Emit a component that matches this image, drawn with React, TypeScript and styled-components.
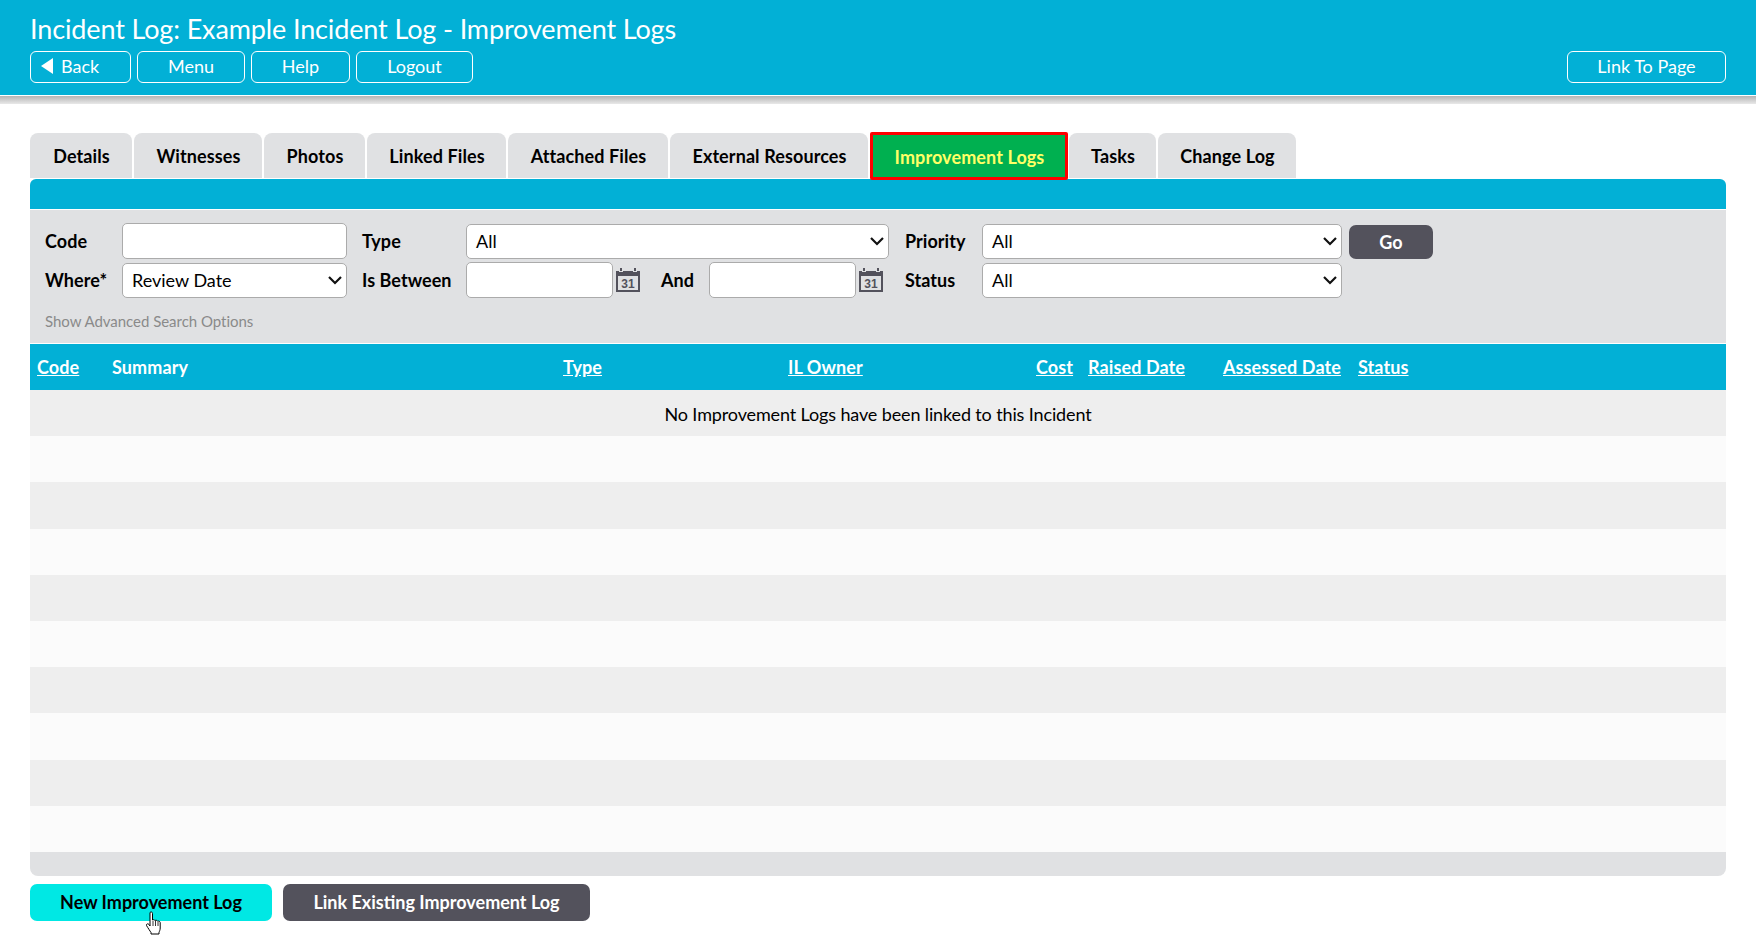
import React from "react";
import styled, { createGlobalStyle } from "styled-components";

const GlobalStyle = createGlobalStyle`
  html, body {
    margin: 0;
    padding: 0;
    background: #fff;
    font-family: Lato, "Open Sans", sans-serif;
    color: #000;
  }
  * { box-sizing: border-box; }
`;

const BLUE = "#02b0d6";
const GREY = "#e0e1e3";
const DARK = "#53525c";

const Page = styled.div`
  width: 1756px;
  height: 943px;
  overflow: hidden;
`;

const Header = styled.header`
  height: 96px;
  background: ${BLUE};
  border-bottom: 1px solid #fff;
  padding: 12px 30px 0;
  color: #fff;
`;

const HeaderShadow = styled.div`
  height: 8px;
  background: linear-gradient(#b4b4b4, #e8e8e8);
`;

const Title = styled.h1`
  margin: 0;
  font-size: 27px;
  line-height: 34px;
  font-weight: 400;
  letter-spacing: -0.13px;
`;

const HeaderBar = styled.div`
  display: flex;
  justify-content: space-between;
  margin-top: 5px;
`;

const NavGroup = styled.nav`
  display: flex;
  gap: 6px;
`;

const NavButton = styled.button<{ $width: number; $start?: boolean }>`
  width: ${(p) => p.$width}px;
  height: 32px;
  display: flex;
  align-items: center;
  justify-content: ${(p) => (p.$start ? "flex-start" : "center")};
  gap: 7px;
  padding: 0 0 2px ${(p) => (p.$start ? "9px" : "0")};
  background: transparent;
  border: 1px solid #fff;
  border-radius: 6px;
  color: #fff;
  font: 400 18px Lato, sans-serif;
`;

const Main = styled.main`
  padding: 29px 30px 0;
`;

const Tabs = styled.div`
  display: flex;
  gap: 2px;
  height: 46px;
`;

const Tab = styled.div<{ $active?: boolean; $width: number }>`
  width: ${(p) => p.$width}px;
  height: ${(p) => (p.$active ? "48px" : "45px")};
  margin: ${(p) => (p.$active ? "-1px -1px 0 0" : "0")};
  padding: ${(p) => (p.$active ? "1px 0 0 1px" : "0 0 0 1px")};
  display: flex;
  align-items: center;
  justify-content: center;
  font-size: 18px;
  font-weight: 700;
  letter-spacing: 0.1px;
  background: ${(p) => (p.$active ? "#00b050" : GREY)};
  color: ${(p) => (p.$active ? "#ffff66" : "#000")};
  border: ${(p) => (p.$active ? "3px solid #f00" : "none")};
  border-radius: ${(p) => (p.$active ? "2px" : "8px 8px 0 0")};
  position: relative;
`;

const BlueBar = styled.div`
  height: 30px;
  background: ${BLUE};
  border-radius: 6px 6px 0 0;
`;

const Filter = styled.form`
  height: 133px;
  margin-top: 1px;
  background: ${GREY};
  padding: 13px 0 0 15px;
`;

const FilterGrid = styled.div`
  display: grid;
  grid-template-columns: 77px 225px 15px 104px 423px 16px 77px 360px 7px 84px;
  grid-template-rows: 36px 36px;
  row-gap: 3px;
  align-items: center;
`;

const Label = styled.label<{ $col: number }>`
  grid-column: ${(p) => p.$col};
  font-size: 18px;
  font-weight: 700;
  letter-spacing: 0.05px;
  white-space: nowrap;
`;

const TextInput = styled.input<{ $col?: number }>`
  ${(p) => (p.$col ? `grid-column: ${p.$col};` : "")}
  width: 100%;
  height: 36px;
  border: 1px solid #ababab;
  border-radius: 5px;
  background: #fff;
`;

const DateInput = styled(TextInput)`
  width: 147px;
`;

const SelectWrap = styled.div<{ $col: number }>`
  grid-column: ${(p) => p.$col};
  height: 35px;
  display: flex;
  align-items: center;
  justify-content: space-between;
  padding: 0 4px 0 9px;
  border: 1px solid #ababab;
  border-radius: 5px;
  background: #fff;
  font-size: 18px;
`;

const DateCell = styled.div`
  display: flex;
  align-items: center;
  gap: 3px;
  width: 175px;
`;

const DateRange = styled.div`
  grid-column: 5;
  display: flex;
  align-items: center;
`;

const AndLabel = styled.span`
  width: 48px;
  margin-left: 20px;
  font-size: 18px;
  font-weight: 700;
`;

const GoButton = styled.button`
  grid-column: 10;
  height: 34px;
  margin-top: 1px;
  border: none;
  border-radius: 7px;
  background: ${DARK};
  color: #fff;
  font: 700 18px Lato, sans-serif;
`;

const AdvancedLink = styled.div`
  margin-top: 14px;
  font-size: 15px;
  letter-spacing: -0.03px;
  color: #8a8a8a;
`;

const TableHead = styled.div`
  display: grid;
  grid-template-columns: 75px 451px 225px 248px 52px 135px 135px 1fr;
  align-items: center;
  height: 46px;
  margin-top: 1px;
  padding-left: 7px;
  background: ${BLUE};
  color: #fff;
  font-size: 18px;
  font-weight: 700;
  letter-spacing: 0.1px;
`;

const HeadLink = styled.a`
  color: #fff;
  text-decoration: underline;
`;

const Row = styled.div<{ $odd: boolean }>`
  height: 46.2px;
  padding-top: 2px;
  display: flex;
  align-items: center;
  justify-content: center;
  background: ${(p) => (p.$odd ? "#eeeeee" : "#fbfbfb")};
  font-size: 18px;
  letter-spacing: -0.13px;
`;

const TableFoot = styled.div`
  height: 24px;
  background: ${GREY};
  border-radius: 0 0 8px 8px;
`;

const Actions = styled.div`
  display: flex;
  gap: 11px;
  margin-top: 8px;
  position: relative;
`;

const ActionButton = styled.button<{ $primary?: boolean; $width: number }>`
  width: ${(p) => p.$width}px;
  height: 37px;
  border: none;
  border-radius: 7px;
  background: ${(p) => (p.$primary ? "#00e8e4" : DARK)};
  color: ${(p) => (p.$primary ? "#000" : "#fff")};
  font: 700 18px Lato, sans-serif;
`;

const CursorIcon = styled.svg`
  position: absolute;
  left: 115px;
  top: 27px;
  width: 18px;
  height: 24px;
`;

const Chevron = () => (
  <svg width="14" height="14" viewBox="0 0 14 14">
    <path d="M1 4 L7 10 L13 4" fill="none" stroke="#111" strokeWidth="2.2" />
  </svg>
);

const BackArrow = () => (
  <svg width="14" height="16" viewBox="0 0 14 16">
    <path d="M13 0 V16 L1 8 Z" fill="#fff" />
  </svg>
);

const CalendarIcon = () => (
  <svg width="24" height="24" viewBox="0 0 24 24">
    <path d="M0 3 H24 V24 H0 Z" fill="#53525c" />
    <rect x="2" y="8" width="20" height="14" fill="#e0e1e3" />
    <rect x="4" y="0" width="2" height="6" fill="#53525c" />
    <rect x="18" y="0" width="2" height="6" fill="#53525c" />
    <rect x="3" y="3" width="4" height="1" fill="#e0e1e3" />
    <rect x="17" y="3" width="4" height="1" fill="#e0e1e3" />
    <text x="12" y="20" textAnchor="middle" fontSize="12" fontWeight="700" fontFamily="Liberation Sans, sans-serif" fill="#53525c">
      31
    </text>
  </svg>
);

const tabs: [string, number][] = [
  ["Details", 102],
  ["Witnesses", 128],
  ["Photos", 101],
  ["Linked Files", 139],
  ["Attached Files", 160],
  ["External Resources", 198],
  ["Improvement Logs", 198],
  ["Tasks", 87],
  ["Change Log", 138],
];

const columns = ["Code", "Summary", "Type", "IL Owner", "Cost", "Raised Date", "Assessed Date", "Status"];

export default function App() {
  return (
    <Page>
      <GlobalStyle />
      <Header>
        <Title>Incident Log: Example Incident Log - Improvement Logs</Title>
        <HeaderBar>
          <NavGroup>
            <NavButton $width={101} $start>
              <BackArrow />
              Back
            </NavButton>
            <NavButton $width={108}>Menu</NavButton>
            <NavButton $width={99}>Help</NavButton>
            <NavButton $width={117}>Logout</NavButton>
          </NavGroup>
          <NavButton $width={159}>Link To Page</NavButton>
        </HeaderBar>
      </Header>
      <HeaderShadow />
      <Main>
        <Tabs>
          {tabs.map(([name, width]) => (
            <Tab key={name} $width={width} $active={name === "Improvement Logs"}>
              {name}
            </Tab>
          ))}
        </Tabs>
        <BlueBar />
        <Filter>
          <FilterGrid>
            <Label $col={1}>Code</Label>
            <TextInput $col={2} />
            <Label $col={4}>Type</Label>
            <SelectWrap $col={5}>
              All
              <Chevron />
            </SelectWrap>
            <Label $col={7}>Priority</Label>
            <SelectWrap $col={8}>
              All
              <Chevron />
            </SelectWrap>
            <GoButton type="button">Go</GoButton>
            <Label $col={1}>Where*</Label>
            <SelectWrap $col={2}>
              Review Date
              <Chevron />
            </SelectWrap>
            <Label $col={4}>Is Between</Label>
            <DateRange>
              <DateCell>
                <DateInput />
                <CalendarIcon />
              </DateCell>
              <AndLabel>And</AndLabel>
              <DateCell>
                <DateInput />
                <CalendarIcon />
              </DateCell>
            </DateRange>
            <Label $col={7}>Status</Label>
            <SelectWrap $col={8}>
              All
              <Chevron />
            </SelectWrap>
          </FilterGrid>
          <AdvancedLink>Show Advanced Search Options</AdvancedLink>
        </Filter>
        <TableHead>
          {columns.map((c) =>
            c === "Summary" ? <span key={c}>{c}</span> : <HeadLink key={c}>{c}</HeadLink>,
          )}
        </TableHead>
        {Array.from({ length: 10 }, (_, i) => (
          <Row key={i} $odd={i % 2 === 0}>
            {i === 0 && "No Improvement Logs have been linked to this Incident"}
          </Row>
        ))}
        <TableFoot />
        <Actions>
          <ActionButton $primary $width={242}>
            New Improvement Log
          </ActionButton>
          <ActionButton $width={307}>Link Existing Improvement Log</ActionButton>
          <CursorIcon viewBox="0 0 18 24" preserveAspectRatio="none">
            <path
              d="M5 1.5 C6 0.5 7.5 1 7.5 2.5 V9 C8.5 8.5 9.5 8.7 10 9.5 C11 9 12 9.3 12.5 10.2 C13.5 9.8 15 10.3 15.2 11.5 V17 C15.2 19 14.5 20 14 21.5 V23 H6 V21.5 C5 20 3 17 1.5 14.5 C1 13.3 2.5 12 4 13.5 L5 15 Z"
              fill="#fff"
              stroke="#000"
              strokeWidth="1"
            />
            <path d="M8 10 V15 M10.5 10 V15 M13 11 V15" stroke="#000" strokeWidth="0.8" fill="none" />
          </CursorIcon>
        </Actions>
      </Main>
    </Page>
  );
}
